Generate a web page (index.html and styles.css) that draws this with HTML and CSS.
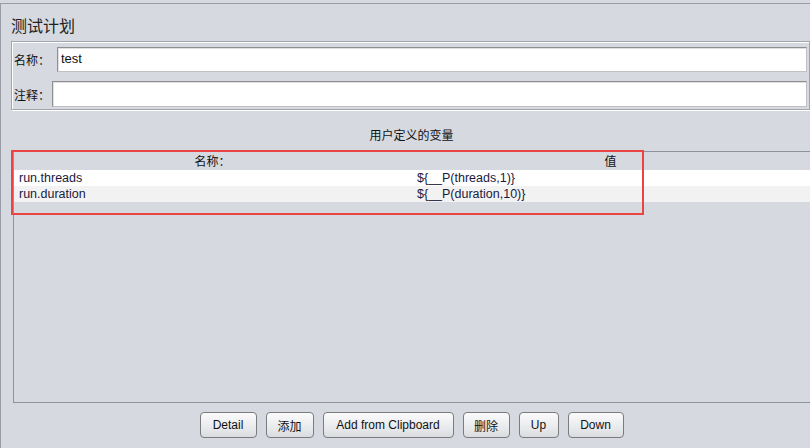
FILE: index.html
```html
<!DOCTYPE html>
<html>
<head>
<meta charset="utf-8">
<link rel="stylesheet" href="styles.css">
</head>
<body>
<div class="frame">
  <div class="title">测试计划</div>
  <div class="info">
    <div class="field f1"><span class="lbl">名称：</span><div class="input">test</div></div>
    <div class="field f2"><span class="lbl">注释：</span><div class="input"></div></div>
  </div>
  <div class="vars-title">用户定义的变量</div>
  <div class="table-panel">
    <div class="row head"><div class="c1">名称：</div><div class="c2">值</div></div>
    <div class="row r1"><div class="c1">run.threads</div><div class="c2">${__P(threads,1)}</div></div>
    <div class="row r2"><div class="c1">run.duration</div><div class="c2">${__P(duration,10)}</div></div>
    <div class="highlight"></div>
  </div>
  <div class="buttons">
    <button class="btn b-detail">Detail</button>
    <button class="btn b-add">添加</button>
    <button class="btn b-clip">Add from Clipboard</button>
    <button class="btn b-del">删除</button>
    <button class="btn b-up">Up</button>
    <button class="btn b-down">Down</button>
  </div>
</div>
</body>
</html>
```
FILE: styles.css
```css
html, body {
  margin: 0;
  padding: 0;
  background: #d6d9e0;
  font-family: "Liberation Sans", Arial, "Noto Sans CJK SC", sans-serif;
  font-size: 12px;
  color: #111;
  overflow: hidden;
}
.frame {
  margin-top: 3px;
  height: 445px;
  border-top: 1px solid #9a9da6;
  border-left: 1px solid #9a9da6;
  box-sizing: border-box;
}
.title {
  padding-left: 10px;
  padding-top: 11px;
  height: 26px;
  font-size: 16px;
  line-height: 20px;
  font-family: "Noto Sans CJK SC", sans-serif;
  color: #222;
}
.info {
  margin-left: 10px;
  border: 1px solid #a2a5ab;
  box-shadow: inset 1px 1px 0 #fff, 1px 1px 0 #fff;
  padding: 5px 1px 2px 1px;
  height: 60px;
}
.field {
  display: flex;
  align-items: center;
}
.f1 { height: 25px; }
.f2 { height: 26px; margin-top: 9px; }
.lbl {
  font-family: "Noto Sans CJK SC", sans-serif;
  font-size: 12px;
  padding-left: 1px;
}
.f1 .lbl { width: 43px; }
.f2 .lbl { width: 38px; }
.input {
  flex: 1;
  height: 100%;
  box-sizing: border-box;
  background: #fff;
  border: 1px solid #c0c0c0;
  border-top-color: #8f8f8f;
  border-left-color: #8f8f8f;
  box-shadow: inset 1px 1px 0 #e0e0e0;
  padding-left: 3px;
  line-height: 22px;
  font-size: 13px;
  margin-right: 1px;
}
.vars-title {
  margin-top: 18px;
  text-align: center;
  font-family: "Noto Sans CJK SC", sans-serif;
  font-size: 12px;
  line-height: 14px;
  height: 14px;
  padding-left: 12px;
}
.table-panel {
  position: relative;
  margin-top: 9px;
  margin-left: 12px;
  height: 252px;
  box-sizing: border-box;
  border-top: 1px solid #8e929a;
  border-left: 1px solid #8e929a;
  border-bottom: 1px solid #8e929a;
}
.row {
  display: flex;
  height: 16px;
  line-height: 16px;
}
.head { height: 18px; line-height: 18px; }
.head .c1, .head .c2 {
  text-align: center;
  font-family: "Noto Sans CJK SC", sans-serif;
  font-size: 12px;
}
.head .c1 { width: 397px; }
.head .c2 { flex: 1; }
.r1 { background: #fff; }
.r2 { background: #f2f2f2; }
.r1 .c1, .r2 .c1 { padding-left: 5px; width: 398px; color: #1a1a40; font-size: 12.5px; }
.r1 .c2, .r2 .c2 { flex: 1; color: #1a1a40; font-size: 12.5px; }
.highlight {
  position: absolute;
  z-index: 5;
  left: -3px;
  top: -2px;
  width: 633px;
  height: 65px;
  box-sizing: border-box;
  border: 2px solid #ea4444;
  pointer-events: none;
}
.buttons {
  display: flex;
  justify-content: center;
  gap: 9px;
  margin-top: 9px;
  padding-left: 12px;
}
.btn {
  height: 26px;
  box-sizing: border-box;
  border: 1px solid #7a7c80;
  border-radius: 4px;
  background: linear-gradient(#fbfbfc, #e6e7ea 70%, #d9dbdf);
  font-family: "Liberation Sans", Arial, "Noto Sans CJK SC", sans-serif;
  font-size: 12px;
  color: #111;
  padding: 0;
  margin: 0;
}
.b-detail { width: 57px; }
.b-add { width: 48px; }
.b-clip { width: 131px; }
.b-del { width: 47px; }
.b-up { width: 40px; }
.b-down { width: 56px; }
```
